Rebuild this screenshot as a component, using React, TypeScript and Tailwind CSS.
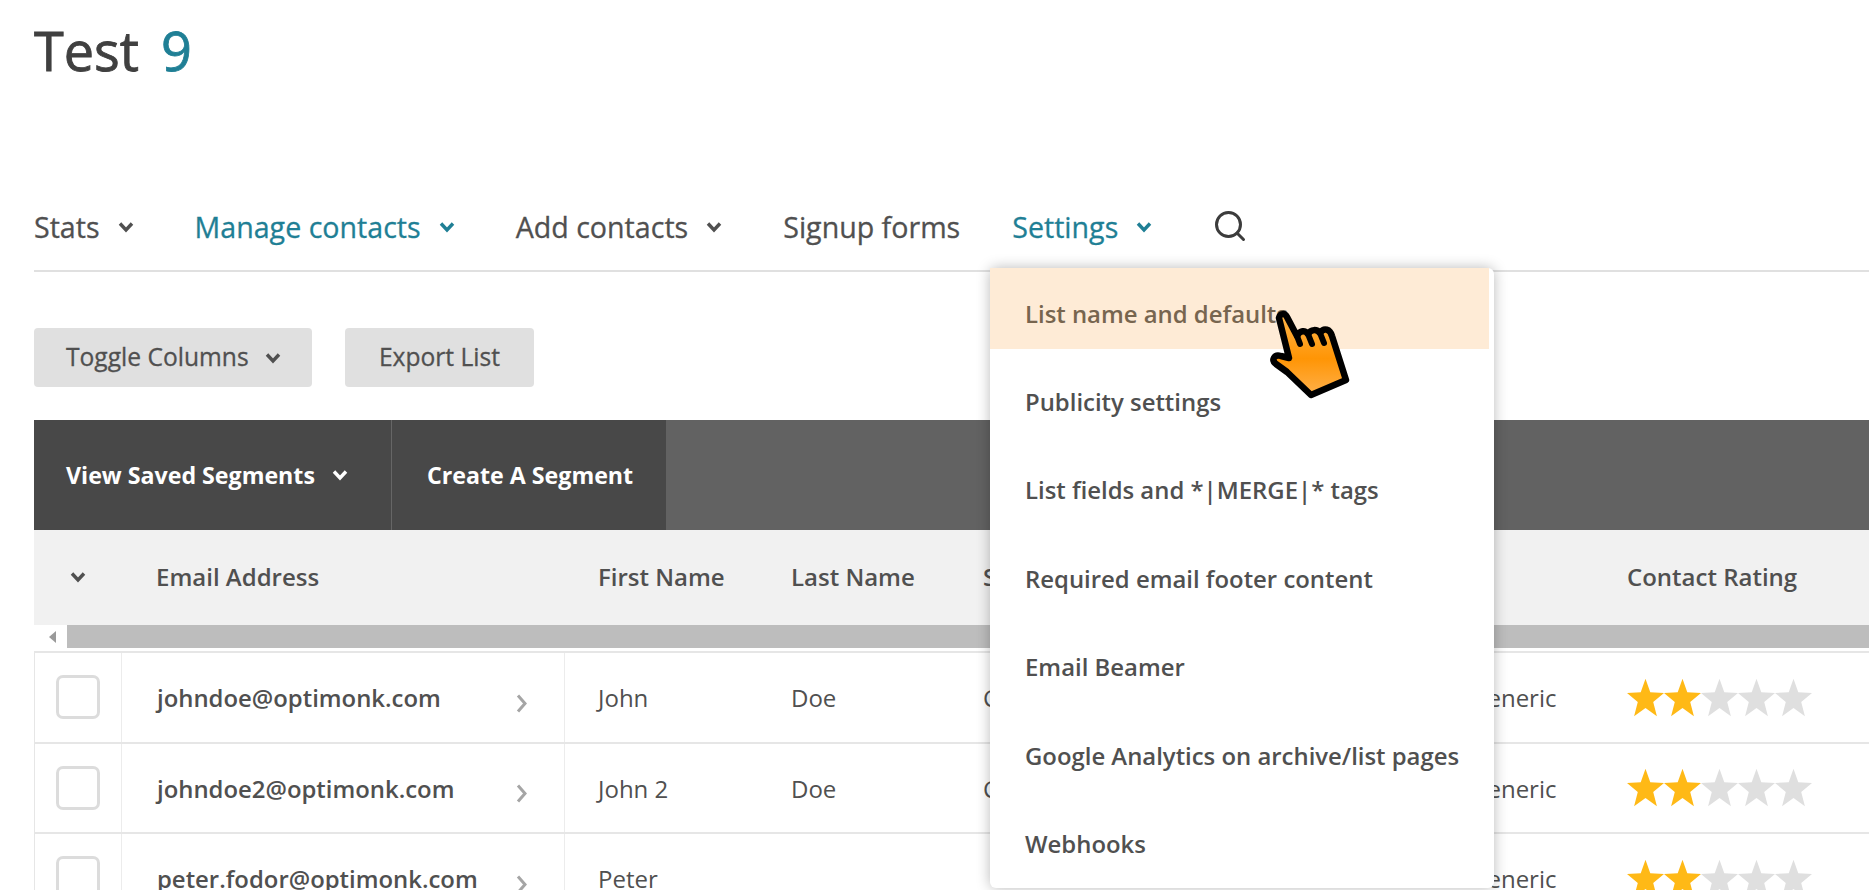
import { Search } from "lucide-react";

const font = "font-['Open_Sans',sans-serif]";

function Chev({ className = "" }: { className?: string }) {
  return (
    <svg viewBox="0 0 16 12" className={`h-[12px] w-[16px] shrink-0 ${className}`} fill="none" stroke="currentColor" strokeWidth="3.4">
      <path d="M2 2.5 8 9l6-6.5" />
    </svg>
  );
}

function Star({ on }: { on: boolean }) {
  return (
    <svg viewBox="0 0 24 24" className={`h-[39px] w-[37px] ${on ? "text-[#ffb916]" : "text-[#dfdfdf]"}`} preserveAspectRatio="none" fill="currentColor">
      <path d="M12 0.5 15.1 8.8 24 9.2 17 14.7 19.4 23.5 12 18.5 4.6 23.5 7 14.7 0 9.2 8.9 8.8Z" />
    </svg>
  );
}

function Hand() {
  return (
    <svg viewBox="0 0 120 110" className="h-[110px] w-[120px]">
      <defs>
        <linearGradient id="hand" x1="0" y1="0" x2="0" y2="1">
          <stop offset="0" stopColor="#ffb54a" />
          <stop offset="0.55" stopColor="#ff9505" />
          <stop offset="1" stopColor="#ffb04a" />
        </linearGradient>
      </defs>
      <path
        d="M39 18C40 13 45 13 47 17L57 36C60 30 65 30 68 34 71 29 77 29 80 33 84 27 90 29 92 36L106 80 71 95 47 72 36 64C31 60 34 54 41 56L49 58Z"
        fill="url(#hand)"
        stroke="#000"
        strokeWidth="6.5"
        strokeLinejoin="round"
      />
      <path d="M57 36 60 44M68 34 72 44M80 33 84 43" stroke="#000" strokeWidth="6" strokeLinecap="round" fill="none" />
    </svg>
  );
}

const nav = [
  { label: "Stats", chev: true, cls: "" },
  { label: "Manage contacts", chev: true, cls: "text-[#1f7f95] ml-[61px]" },
  { label: "Add contacts", chev: true, cls: "ml-[61px]" },
  { label: "Signup forms", chev: false, cls: "ml-[61px]" },
  { label: "Settings", chev: true, cls: "text-[#1f7f95] ml-[52px]" },
];

const rows = [
  { email: "johndoe@optimonk.com", first: "John", last: "Doe", source: "Contact" },
  { email: "johndoe2@optimonk.com", first: "John 2", last: "Doe", source: "Contact" },
  { email: "peter.fodor@optimonk.com", first: "Peter", last: "", source: "" },
];

const menu = [
  "List name and defaults",
  "Publicity settings",
  "List fields and *|MERGE|* tags",
  "Required email footer content",
  "Email Beamer",
  "Google Analytics on archive/list pages",
  "Webhooks",
];

export default function App() {
  return (
    <div className={`relative h-[890px] w-[1869px] overflow-hidden bg-white pl-[34px] text-[#505050] ${font}`}>
      <h1 className="pt-[14px] text-[54px] leading-[72px] text-[#404040] [-webkit-text-stroke:0.8px_currentColor]">
        Test <span className="ml-[8px] text-[#1f7f95]">9</span>
      </h1>

      <div className="mt-[110px] flex h-[76px] items-center border-b-2 border-[#e0e0e0] pb-[11px] text-[28.6px] [-webkit-text-stroke:0.3px_currentColor]">
        {nav.map((n) => (
          <div key={n.label} className={`flex items-center ${n.cls}`}>
            {n.label}
            {n.chev && <Chev className="ml-[18px]" />}
          </div>
        ))}
        <Search className="-mt-[3px] ml-[60px] h-[36px] w-[36px] text-[#3c3c3c]" strokeWidth={2} />
      </div>

      <div className="mt-[56px] flex gap-[33px] text-[24.6px] [-webkit-text-stroke:0.3px_currentColor]">
        <button className="flex h-[59px] w-[278px] items-center rounded-[4px] bg-[#e0e0e0] pl-[32px]">
          Toggle Columns
          <Chev className="ml-[16px]" />
        </button>
        <button className="flex h-[59px] w-[189px] items-center justify-center rounded-[4px] bg-[#e0e0e0]">Export List</button>
      </div>

      <div className="mt-[33px] flex h-[110px] items-stretch bg-[#626262] text-[23.2px] font-bold text-white">
        <div className="flex w-[358px] items-center border-r border-[#666] bg-[#484848] pl-[32px]">
          View Saved Segments
          <Chev className="ml-[17px]" />
        </div>
        <div className="flex w-[274px] items-center bg-[#484848] pl-[35px]">Create A Segment</div>
      </div>

      <div className="flex h-[95px] items-center bg-[#f1f1f1] pb-[2px] text-[24px] font-semibold">
        <div className="flex w-[88px] justify-center"><Chev /></div>
        <div className="w-[442px] pl-[34px]">Email Address</div>
        <div className="w-[227px] pl-[34px]">First Name</div>
        <div className="w-[192px]">Last Name</div>
        <div className="w-[644px]">Status</div>
        <div>Contact Rating</div>
      </div>

      <div className="relative flex h-[28px] items-start border-b-2 border-[#e6e6e6]">
        <svg viewBox="0 0 8 12" className="ml-[15px] mt-[6px] h-[12px] w-[8px] text-[#9a9a9a]" fill="currentColor"><path d="M7 0v12L0 6z" /></svg>
        <div className="ml-[10px] h-[23px] flex-1 bg-[#bdbdbd]" />
      </div>

      {rows.map((r) => (
        <div key={r.email} className="flex h-[90.5px] items-stretch border-b-2 border-l border-[#e6e6e6] text-[24px]">
          <div className="flex w-[87px] items-center justify-center border-r border-[#ececec]">
            <div className="h-[44px] w-[44px] rounded-[7px] border-[3px] border-[#dcdcdc]" />
          </div>
          <div className="flex w-[443px] items-center justify-between border-r border-[#ececec] pl-[35px] pr-[36px] pt-[2px] text-[23.9px] font-semibold">
            {r.email}
            <svg viewBox="0 0 12 20" className="mt-[10px] h-[21px] w-[12px] text-[#a5a5a5]" fill="none" stroke="currentColor" strokeWidth="3"><path d="M2 2l7 8-7 8" /></svg>
          </div>
          <div className="flex w-[226px] items-center pl-[33px] pt-[2px]">{r.first}</div>
          <div className="flex w-[192px] items-center pt-[2px]">{r.last}</div>
          <div className="flex w-[482px] items-center pt-[2px]">{r.source}</div>
          <div className="flex w-[162px] items-center pl-[5px] pt-[2px]">Generic</div>
          <div className="flex items-center">
            <div className="flex">
              {[0, 1, 2, 3, 4].map((i) => (
                <Star key={i} on={i < 2} />
              ))}
            </div>
          </div>
        </div>
      ))}

      <div className="absolute left-[990px] top-[268px] h-[620px] w-[504px] rounded-[6px] bg-white text-[23.9px] font-semibold shadow-[0_0_14px_rgba(0,0,0,0.28)]">
        {menu.map((m, i) =>
          i === 0 ? (
            <div key={m} className="mb-[8.5px] mr-[5px] flex h-[81px] items-center bg-[#feebd6] pl-[35px] pt-[11px] text-[#77654f]">
              {m}
            </div>
          ) : (
            <div key={m} className="flex h-[88.5px] items-center pl-[35px]">
              {m}
            </div>
          ),
        )}
      </div>

      <div className="absolute left-[1240px] top-[300px]">
        <Hand />
      </div>
    </div>
  );
}
